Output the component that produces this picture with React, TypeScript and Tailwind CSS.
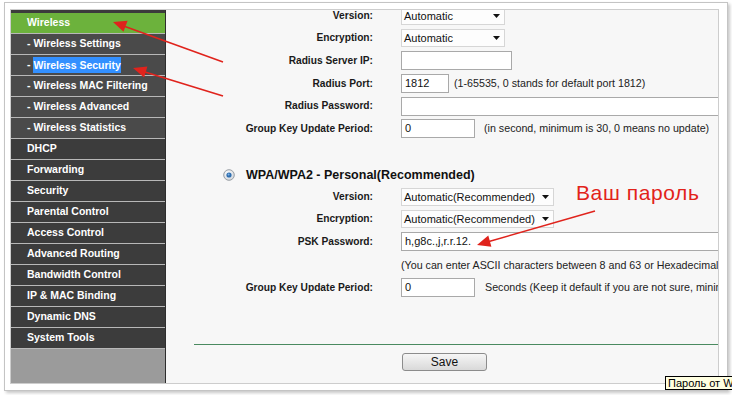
import React from "react";

type Item = { label: string; kind: "active" | "sub" | "main"; selected?: boolean };

const items: Item[] = [
  { label: "Wireless", kind: "active" },
  { label: "Wireless Settings", kind: "sub" },
  { label: "Wireless Security", kind: "sub", selected: true },
  { label: "Wireless MAC Filtering", kind: "sub" },
  { label: "Wireless Advanced", kind: "sub" },
  { label: "Wireless Statistics", kind: "sub" },
  { label: "DHCP", kind: "main" },
  { label: "Forwarding", kind: "main" },
  { label: "Security", kind: "main" },
  { label: "Parental Control", kind: "main" },
  { label: "Access Control", kind: "main" },
  { label: "Advanced Routing", kind: "main" },
  { label: "Bandwidth Control", kind: "main" },
  { label: "IP & MAC Binding", kind: "main" },
  { label: "Dynamic DNS", kind: "main" },
  { label: "System Tools", kind: "main" },
];

function SideItem({ item }: { item: Item }) {
  const bg =
    item.kind === "active"
      ? "bg-[#6cb23c]"
      : item.kind === "sub"
      ? "bg-[#4a4a4a]"
      : "bg-[#3c3c3c]";
  return (
    <div
      className={`h-[21px] flex items-center pl-[16px] border-b border-[#b8b8b8] text-white font-bold text-[10.5px] whitespace-nowrap ${bg}`}
    >
      {item.kind === "sub" ? (
        <>
          <span>-&nbsp;</span>
          {item.selected ? (
            <span className="bg-[#3390ff] leading-[16px]">{item.label}</span>
          ) : (
            <span>{item.label}</span>
          )}
        </>
      ) : (
        <span>{item.label}</span>
      )}
    </div>
  );
}

function Caret() {
  return (
    <svg width="7" height="4" viewBox="0 0 7 4" className="shrink-0">
      <path d="M0 0 L7 0 L3.5 4 Z" fill="#111" />
    </svg>
  );
}

function Select({ value, w }: { value: string; w: string }) {
  return (
    <div
      className={`h-[18px] ${w} border border-[#d6d6d6] bg-[#fdfdfd] flex items-center justify-between pl-[2px] pr-[4px] text-[11px] text-[#111] whitespace-nowrap`}
    >
      <span>{value}</span>
      <Caret />
    </div>
  );
}

function Input({ value, w }: { value?: string; w: string }) {
  return (
    <div
      className={`h-[19px] ${w} shrink-0 border border-[#a9a9a9] bg-white flex items-center pl-[3px] text-[11px] text-[#111] whitespace-nowrap`}
    >
      {value}
    </div>
  );
}

function Row({
  h,
  label,
  children,
}: {
  h: string;
  label?: string;
  children?: React.ReactNode;
}) {
  return (
    <div className={`${h} flex items-center`}>
      <div className="w-[207px] shrink-0 text-right font-bold text-[10.2px] text-[#1a1a1a] whitespace-nowrap">
        {label}
      </div>
      <div className="ml-[28px] flex items-center whitespace-nowrap min-w-0 flex-1">
        {children}
      </div>
    </div>
  );
}

function Desc({ children, ml }: { children: React.ReactNode; ml: string }) {
  return (
    <span className={`${ml} text-[10.7px] text-[#222] whitespace-nowrap`}>{children}</span>
  );
}

export default function App() {
  return (
    <div className="relative w-[732px] h-[395px] overflow-hidden bg-white font-['Liberation_Sans',Arial,sans-serif]">
      <div className="pt-[2px] pl-[4px]">
        <div className="w-[724px] h-[389px] border border-[#c4c4c4] bg-white shadow-[2px_2px_3px_rgba(0,0,0,0.22)] pt-[6px] pl-[5px]">
          <div className="w-[709px] h-[375px] border border-[#cdcdcd] flex">
            {/* Sidebar */}
            <div className="w-[155px] shrink-0 flex flex-col border-r border-[#2e2e2e] bg-[#3c3c3c] pt-[3px]">
              {items.map((it) => (
                <SideItem key={it.label} item={it} />
              ))}
              <div className="flex-1 bg-[#9b9b9b]" />
            </div>

            {/* Main */}
            <div className="flex-1 min-w-0 bg-[#f7f7f7] overflow-hidden">
              <div className="-mt-[5px] flex flex-col">
                <Row h="h-[22px]" label="Version:">
                  <Select value="Automatic" w="w-[104px]" />
                </Row>
                <Row h="h-[22px]" label="Encryption:">
                  <Select value="Automatic" w="w-[104px]" />
                </Row>
                <Row h="h-[23px]" label="Radius Server IP:">
                  <Input w="w-[111px]" />
                </Row>
                <Row h="h-[23px]" label="Radius Port:">
                  <Input w="w-[48px]" value="1812" />
                  <Desc ml="ml-[5px]">(1-65535, 0 stands for default port 1812)</Desc>
                </Row>
                <Row h="h-[22px]" label="Radius Password:">
                  <Input w="w-[340px]" />
                </Row>
                <Row h="h-[23px]" label="Group Key Update Period:">
                  <Input w="w-[74px]" value="0" />
                  <Desc ml="ml-[9px]">(in second, minimum is 30, 0 means no update)</Desc>
                </Row>

                <div className="h-[24px]" />

                <div className="h-[22px] flex items-center pl-[57px]">
                  <svg width="12" height="12" viewBox="0 0 12 12" className="shrink-0">
                    <defs>
                      <radialGradient id="rg" cx="0.4" cy="0.35" r="0.7">
                        <stop offset="0" stopColor="#ffffff" />
                        <stop offset="1" stopColor="#cfd4da" />
                      </radialGradient>
                    </defs>
                    <circle cx="6" cy="6" r="5.3" fill="url(#rg)" stroke="#8f959c" strokeWidth="0.9" />
                    <circle cx="6" cy="6" r="2.6" fill="#2f6fb0" />
                    <circle cx="5.6" cy="5.5" r="1" fill="#7fb2e6" />
                  </svg>
                  <span className="ml-[11px] font-bold text-[12.5px] text-[#111] whitespace-nowrap">
                    WPA/WPA2 - Personal(Recommended)
                  </span>
                </div>
                <Row h="h-[22px]" label="Version:">
                  <Select value="Automatic(Recommended)" w="w-[153px]" />
                </Row>
                <Row h="h-[22px]" label="Encryption:">
                  <Select value="Automatic(Recommended)" w="w-[153px]" />
                </Row>
                <Row h="h-[23px]" label="PSK Password:">
                  <Input w="w-[340px]" value="h,g8c.,j,r.r.12." />
                </Row>
                <Row h="h-[24px]">
                  <span className="text-[10.7px] text-[#222] whitespace-nowrap">
                    (You can enter ASCII characters between 8 and 63 or Hexadecimal characters between 8 and 64.)
                  </span>
                </Row>
                <Row h="h-[21px]" label="Group Key Update Period:">
                  <Input w="w-[74px]" value="0" />
                  <Desc ml="ml-[10px]">
                    Seconds (Keep it default if you are not sure, minimum is 30, 0 means no update)
                  </Desc>
                </Row>

                <div className="mt-[46px] ml-[28px] h-[1px] bg-[#4a8a60]" />
                <div className="mt-[8px] pl-[236px]">
                  <div className="w-[85px] h-[18px] border border-[#8c8c8c] rounded-[3px] bg-gradient-to-b from-[#f6f6f6] to-[#d9d9d9] flex items-center justify-center text-[12px] text-[#111]">
                    Save
                  </div>
                </div>
              </div>
            </div>
          </div>
        </div>
      </div>

      {/* Annotation arrows */}
      <svg
        className="absolute left-0 top-0 pointer-events-none"
        width="732"
        height="395"
        viewBox="0 0 732 395"
      >
        <g stroke="#e0231c" strokeWidth="1.6" fill="none">
          <line x1="223" y1="62" x2="125" y2="26.4" />
          <line x1="223" y1="96" x2="145" y2="71.9" />
          <line x1="595" y1="211" x2="489" y2="241.5" />
        </g>
        <g fill="#e0231c">
          <polygon points="113,22 127.6,20.8 123.5,31.8" />
          <polygon points="133,68 147.4,66.5 144.1,77.6" />
          <polygon points="477,245 488.3,235.6 491.4,246.8" />
        </g>
      </svg>

      <div className="absolute left-[576px] top-[182px] text-[21px] tracking-[0.6px] leading-none text-[#e2231a] whitespace-nowrap">
        Ваш пароль
      </div>

      <div className="absolute left-[665px] top-[376px] border border-black bg-[#ffffe1] text-[11px] leading-[12px] px-[2px] text-black whitespace-nowrap">
        Пароль от WiFi
      </div>
    </div>
  );
}
